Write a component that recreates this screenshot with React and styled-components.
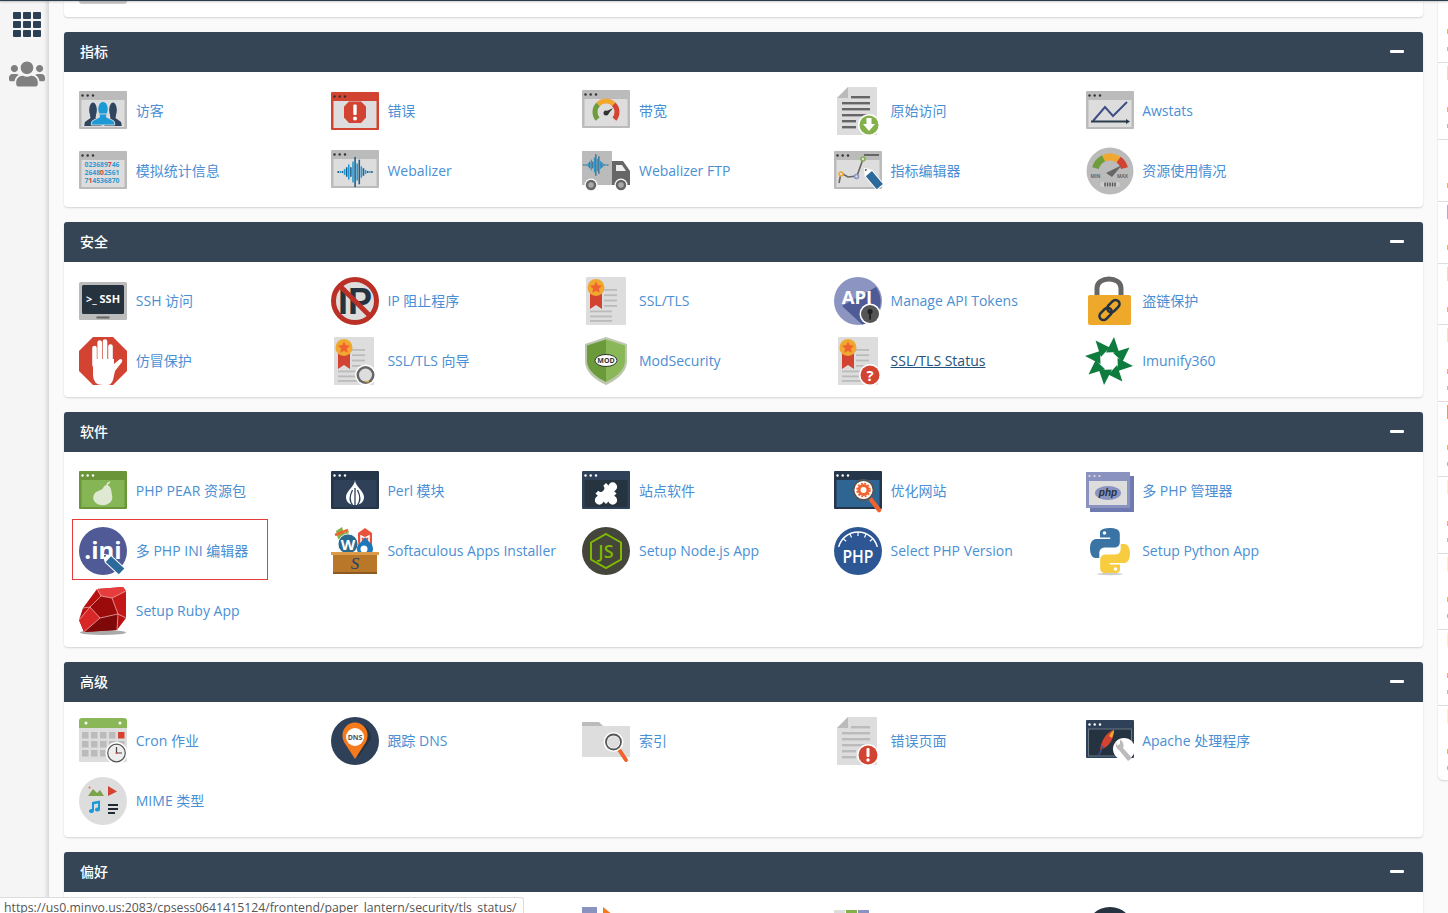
import React from 'react';
import styled, { createGlobalStyle } from 'styled-components';
import { FaUsers } from 'react-icons/fa';

const Global = createGlobalStyle`
  html, body { margin: 0; padding: 0; height: 913px; overflow: hidden; background: #fafafa; }
  body { font-family: "Open Sans", "Noto Sans CJK SC", sans-serif; font-size: 14px; }
  *, *::after { box-sizing: border-box; }
`;

const Page = styled.div`height: 913px; overflow: hidden; display: flex; flex-direction: column; background: #fafafa;`;
const TopLine = styled.div`height: 1px; flex: none; background: #2c3e50; box-shadow: 0 1px 2px rgba(0,0,0,.3); position: relative; z-index: 2;`;
const Shell = styled.div`flex: 1; min-height: 0; display: flex;`;
const Rail = styled.nav`
  width: 49px; flex: none; display: flex; flex-direction: column; align-items: center; gap: 19px;
  padding: 11px 0 0 5px; background: #f5f5f5; box-shadow: inset -4px 0 4px -2px rgba(0,0,0,.14);
  color: #808080;
`;
const Main = styled.main`width: 1359px; flex: none; margin-left: 15px; display: flex; flex-direction: column; gap: 15px;`;
const Panel = styled.section`
  background: #fff; border-radius: 4px; box-shadow: 0 1px 2px rgba(0,0,0,.16); flex: none;
`;
const Stub = styled(Panel)`height: 16px; border-radius: 0 0 4px 4px; padding-left: 15px; overflow: hidden;`;
const StubIcon = styled.div`width: 48px; height: 3px; background: #ccc; border-radius: 0 0 12px 12px;`;
const Head = styled.header`
  height: 40px; display: flex; align-items: center; justify-content: space-between; padding: 0 19px 2px 16px;
  background: #354556; color: #fff; border-radius: 3px 3px 0 0; font-weight: 500;
`;
const Collapse = styled.span`width: 14px; height: 3px; background: #fff; border-radius: 1px;`;
const Body = styled.div`display: grid; grid-template-columns: repeat(5, 251.6px); grid-auto-rows: 60px; padding: 9px 0 6px 15.2px;`;
const Item = styled.a`
  position: relative; display: flex; align-items: center; gap: 8.6px; height: 60px; white-space: nowrap;
  color: ${p => (p.$hover ? '#23527c' : '#4a8fd4')};
  text-decoration: none;
  ${p => p.$marked && `&::after { content: ''; position: absolute; left: -7px; top: -2px; width: 196px; height: 61px; border: 1px solid #e43b3b; }`}
`;
const Label = styled.span`line-height: 20px; text-decoration: ${p => (p.$hover ? 'underline' : 'none')};`;
const Aside = styled.aside`
  width: 10px; flex: none; margin-left: 15px; height: 779px; background: #fff; border-radius: 0 0 0 5px;
  box-shadow: 0 1px 2px rgba(0,0,0,.16); overflow: hidden;
`;
const Stat = styled.div`
  height: ${p => p.$h}px; border-bottom: 1px solid #ddd; position: relative;
  &:last-child { border-bottom: 0; }
`;
const Mark = styled.i`
  position: absolute; right: 0; width: 1px; height: ${p => p.$size || 5}px; background: ${p => p.$color}; top: ${p => p.$top}px;
`;
const Status = styled.div`
  position: fixed; left: 0; bottom: 0; width: 524px; height: 16px; padding: 1px 0 0 4px; background: #fff; overflow: hidden;
  border: 1px solid #ddd; border-width: 1px 1px 0 0; border-radius: 0 3px 0 0; z-index: 5; color: #555;
  font-size: 12.28px; line-height: 18px; white-space: nowrap;
`;
const Svg = styled.svg`width: 48px; height: 48px; flex: none; display: block;`;
const IconText = styled.text`font-family: "Open Sans", sans-serif; font-weight: 700;`;

const polar = (cx, cy, r, a) => [cx + r * Math.sin(a * Math.PI / 180), cy - r * Math.cos(a * Math.PI / 180)];
const arc = (cx, cy, r, a, b) => {
  const [x1, y1] = polar(cx, cy, r, a); const [x2, y2] = polar(cx, cy, r, b);
  return `M${x1} ${y1}A${r} ${r} 0 ${b - a > 180 ? 1 : 0} 1 ${x2} ${y2}`;
};
const Frame = ({ y = 4, frame = '#bbb', inner = '#ddd', dot = '#333', children }) => (
  <>
    <rect y={y} width="48" height="38" fill={frame} rx="1" />
    <rect x="2.5" y={y + 9} width="43" height="27" fill={inner} />
    {[3.5, 8.7, 14].map(x => <circle key={x} cx={x} cy={y + 4.5} r="1.2" fill={dot} />)}
    {children}
  </>
);
const Person = ({ x, c, s = 1, edge }) => (
  <g transform={`translate(${x} 0) scale(${s} 1)`} fill={c} stroke={edge} strokeWidth={edge ? 1 : 0}>
    <ellipse cx="0" cy="23" rx="6.2" ry="7.5" />
    <path d="M-5 28 L-4 31 L-13 35 Q-14 37 -14 39 H14 Q14 37 13 35 L4 31 L5 28Z" />
  </g>
);
const Wave = ({ cx, cy, k = 1, a = '#1d9ad6', b = '#1f5f8b' }) => {
  const hs = [1, 1, 1, 3, 5, 8, 5, 11, 16, 9, 13, 6, 4, 2, 1, 1, 1];
  return <g>{hs.map((h, i) => <rect key={i} x={cx + (i - 8) * 2 * k - .7} y={cy - h * k * .9} width={1.5 * k} height={h * 1.8 * k} fill={i % 2 ? a : b} />)}</g>;
};
const Doc = ({ line = '#bbb' }) => (
  <>
    <path d="M14 0H42a1 1 0 0 1 1 1V48H3V11Z" fill="#ddd" />
    <path d="M14 0V11H3Z" fill="#bbb" />
    {[9, 15, 21, 27, 33, 39].map((y, i) => <rect key={y} x={i === 0 ? 17 : 8} y={y} width={i === 0 ? 19 : i > 3 ? 14 : 28} height="2.4" fill={line} />)}
  </>
);
const Cert = () => (
  <>
    <rect x="3" width="40" height="48" rx="1" fill="#ddd" />
    {[12, 17.3, 22.6, 28].map(y => <rect key={y} x="21" y={y} width="13" height="1.8" fill="#bbb" />)}
    {[33.5, 38.5, 43].map(y => <rect key={y} x="7" y={y} width="22" height="1.8" fill="#bbb" />)}
    <path d="M7 14H19V32L13 28L7 32Z" fill="#d24332" />
    <circle cx="13" cy="10.5" r="8.5" fill="#f0a830" />
    <path d="M13 4.5l1.8 3.8 4.2.5-3.1 2.8.8 4.1-3.7-2-3.7 2 .8-4.1L7 8.800l4.200-.5Z" fill="#f2622e" />
  </>
);
const Badge = ({ cx = 35, cy = 38, r = 9.500, c, children }) => (
  <><circle cx={cx} cy={cy} r={r + 1.5} fill="#fff" /><circle cx={cx} cy={cy} r={r} fill={c} />{children}</>
);
const Pencil = ({ x, y, a = 45, len = 20, w = 7, c = '#2c6a9c' }) => (
  <g transform={`translate(${x} ${y}) rotate(${a})`}>
    <path d={`M0 0L6 ${-w / 2}H${len}V${w / 2}H6Z`} fill="#fff" stroke="#fff" strokeWidth="2" strokeLinejoin="round" />
    <path d={`M6 ${-w / 2}H${len}V${w / 2}H6Z`} fill={c} />
    <path d="M0 0L2 -1.200V1.200Z" fill="#222" />
  </g>
);
const Icon = ({ children }) => <Svg viewBox="0 0 48 48" overflow="visible">{children}</Svg>;

const I = {
  Visitors: () => <Icon><Frame><Person x={14} c="#2f4560" s={.62} /><Person x={34} c="#2f4560" s={.62} /><g transform="translate(0 -1)"><Person x={24} c="#1d9ad6" s={.84} edge="#ddd" /></g></Frame></Icon>,
  Errors: () => <Icon><Frame y={5} frame="#d24332"><path d="M18 14.500H30L35 19.500V30.500L30 36H18L13 30.500V19.500Z" fill="#d24332" /><rect x="22.300" y="17.500" width="3.400" height="10.500" rx="1" fill="#fff" /><circle cx="24" cy="31.500" r="2" fill="#fff" /></Frame></Icon>,
  Bandwidth: () => <Icon><Frame y={3}><g fill="none" strokeWidth="5"><path d={arc(24, 25, 11, -130, -45)} stroke="#6f9c3c" /><path d={arc(24, 25, 11, -45, 45)} stroke="#f0a830" /><path d={arc(24, 25, 11, 45, 130)} stroke="#d24332" /></g><path d="M23 25L31 21L25.500 28Z" fill="#333" /><circle cx="24" cy="26" r="2.500" fill="#333" /></Frame></Icon>,
  Raw: () => <Icon><Doc line="#666" /><Badge cx={35} cy={38} r={9.500} c="#84b04c"><path d="M32.500 31H37.500V37H41L35 44L29 37H32.500Z" fill="#fff" /></Badge></Icon>,
  Awstats: () => <Icon><Frame><path d="M7 34L19 20L27 29L41 15" fill="none" stroke="#3f4f86" strokeWidth="2" /><path d="M5 34.500H41" stroke="#2a3b4d" strokeWidth="2" /><path d="M40 32l4 2.500-4 2.500Z" fill="#2a3b4d" /></Frame></Icon>,
  Analog: () => <Icon><Frame><g fontSize="6.800" fill="#2b9bd4"><IconText x="5.500" y="19.500">023689<tspan fill="#d24332">7</tspan>46</IconText><IconText x="5.500" y="28">2648<tspan fill="#d24332">0</tspan>2561</IconText><IconText x="5.500" y="36.300">7<tspan fill="#d24332">1</tspan>4536870</IconText></g></Frame></Icon>,
  Webalizer: () => <Icon><Frame y={3}><Wave cx={24} cy={25} k={1.050} /></Frame></Icon>,
  Truck: () => <Icon><path d="M0 4H30V38H0Z" fill="#bbb" /><path d="M30 14H41L48 24V38H30Z" fill="#666" /><path d="M34 18H40L44 24H34Z" fill="#eee" /><Wave cx={14} cy={18} k={.75} /><g fill="#fff"><circle cx="9" cy="38" r="6.500" /><circle cx="39" cy="38" r="6.500" /></g><g fill="#aaa" stroke="#666" strokeWidth="2.500"><circle cx="9" cy="38" r="4" /><circle cx="39" cy="38" r="4" /></g></Icon>,
  MetricsEd: () => <Icon><Frame><path d="M5 36L7 26L14 30L23 29L29 12" fill="none" stroke="#666" strokeWidth="1.600" /><path d="M30 8H45" stroke="#666" strokeWidth="2" /><g fill="#ddd" strokeWidth="1.500"><circle cx="7" cy="27" r="2" stroke="#f0a830" /><circle cx="22.500" cy="29.500" r="2" stroke="#8a93c0" /><circle cx="29" cy="12" r="2" stroke="#84b04c" /></g><Pencil x={31} y={22} a={50} len={23} w={8} /></Frame></Icon>,
  Resource: () => <Icon><circle cx="24" cy="24" r="23.500" fill="#bbb" /><g fill="none" strokeWidth="7"><path d={arc(24, 25, 15, -75, -25)} stroke="#6f9c3c" /><path d={arc(24, 25, 15, -25, 35)} stroke="#f0a830" /><path d={arc(24, 25, 15, 35, 75)} stroke="#d24332" /></g><path d="M20 26L36 18L26 30Z" fill="#666" /><g fontSize="4.800" fill="#666"><IconText x="4.500" y="31">MIN</IconText><IconText x="31" y="31">MAX</IconText></g><rect x="14" y="35" width="20" height="5" rx="2.500" fill="#ccc" />{[19, 21.500, 24, 26.500, 29].map(x => <rect key={x} x={x - .7} y="35.500" width="1.500" height="4" fill="#555" />)}</Icon>,
  Ssh: () => <Icon><rect y="5" width="48" height="38" rx="1.500" fill="#bbb" /><rect x="3" y="8" width="42" height="29" rx="1.500" fill="#26333f" /><rect x="17.500" y="39.500" width="13" height="2" fill="#666" /><IconText x="7" y="25.500" fontSize="10.500" fill="#fff" textLength="34" lengthAdjust="spacingAndGlyphs">&gt;_ SSH</IconText></Icon>,
  Block: () => <Icon><circle cx="24" cy="24" r="21.500" fill="#ddd" stroke="#bb3026" strokeWidth="5" /><text x="24" y="37" textAnchor="middle" fontFamily="'Liberation Sans', sans-serif" fontWeight="700" fontSize="36" fill="#25323f">IP</text><path d="M9 9L39 39" stroke="#bb3026" strokeWidth="5" /></Icon>,
  Hand: () => <Icon><path d="M14 0H34L48 14V34L34 48H14L0 34V14Z" fill="#d24332" /><path d="M14 26V38Q14 48 24 48H29Q32 48 34 43L36 34L43 25Q44 22 41 22L35 27V22H14Z" fill="#fff" /><g stroke="#fff" strokeWidth="4.600" strokeLinecap="round"><path d="M15.500 28V11" /><path d="M20.700 24V5.500" /><path d="M26 24V4.500" /><path d="M31.500 28V9.500" /></g></Icon>,
  Ssl: () => <Icon><g transform="translate(1 0)"><Cert /></g></Icon>,
  Api: () => <Icon><circle cx="24" cy="24" r="24" fill="#8c95c1" /><path d="M8 29L42 10A24 24 0 0 1 28 47.500L8 29Z" fill="#4f5b96" /><IconText x="23" y="27" textAnchor="middle" fontSize="18.500" fill="#fff">API</IconText><Badge cx={36} cy={37} r={9} c="#555"><circle cx="36" cy="34.500" r="2.600" fill="#222" /><rect x="35" y="35" width="2" height="7.500" fill="#222" /></Badge></Icon>,
  Lock: () => <Icon><path d="M11 20V11C11 -1 35 -1 35 11V20" fill="none" stroke="#666" strokeWidth="5" /><rect x="2" y="18" width="43" height="30" rx="2" fill="#eea82a" /><g fill="none" stroke="#25323f" strokeWidth="2.600" transform="rotate(-45 23.500 33)"><rect x="11" y="29" width="14" height="8" rx="4" /><rect x="22" y="29" width="14" height="8" rx="4" /></g></Icon>,
  Wizard: () => <Icon><Cert /><Badge cx={34.500} cy={38} r={9} c="#666"><circle cx="34.500" cy="38" r="6.500" fill="#ddd" /><path d="M34 44.500H38" stroke="#f0a830" strokeWidth="1.500" /></Badge></Icon>,
  Mod: () => <Icon><path d="M24 0L45 7V24C45 36 33 44 24 48C15 44 3 36 3 24V7Z" fill="#bcc7ae" /><path d="M24 2.500V45C16 41 5 34 5 24V8.500Z" fill="#6a9a3a" /><path d="M24 2.500V45C32 41 43 34 43 24V8.500Z" fill="#8ab858" /><ellipse cx="24" cy="23.500" rx="11" ry="6" fill="#fff" stroke="#333" strokeWidth="1" /><IconText x="24" y="26" textAnchor="middle" fontSize="7" fill="#333">MOD</IconText></Icon>,
  SslStatus: () => <Icon><g transform="translate(1 0)"><Cert /></g><Badge cx={36} cy={38} r={9.500} c="#d24332"><IconText x="36" y="44" textAnchor="middle" fontSize="15" fill="#fff">?</IconText></Badge></Icon>,
  Imunify: () => <Icon>{[0, 45, 90, 135, 180, 225, 270, 315].map(a => <polygon key={a} transform={`rotate(${a} 23 24)`} points="28,0 33,15 20,15.500" fill="#0e7c3e" />)}<circle cx="23" cy="24" r="7.500" fill="#fff" /></Icon>,
  Pear: () => <Icon><Frame frame="#6a9538" inner="#85b555" dot="#fff"><path d="M31 15Q28 16 28 19" stroke="#dfe8d2" strokeWidth="1.500" fill="none" /><path d="M28 18C33 20 32 24 33 28C35 35 28 39 22 38C15 37 12 31 16 26C19 23 22 24 24 21C25 19 26 18 28 18Z" fill="#dfe8d2" /></Frame></Icon>,
  Perl: () => <Icon><Frame frame="#26364a" inner="#2f4059" dot="#fff"><path d="M24 13C24 19 33 24 33 30C33 36 28 38 24 38C20 38 15 36 15 30C15 24 24 19 24 13Z" fill="#fff" /><g fill="none" stroke="#2f4059" strokeWidth="1.300"><path d="M24 21V38" /><path d="M21.500 23C18 30 19 35 21.500 38" /><path d="M26.500 23C30 30 29 35 26.500 38" /></g></Frame></Icon>,
  Software: () => <Icon><Frame frame="#2f4059" inner="#25343f" dot="#fff"><g transform="translate(24 26.500) rotate(45) scale(1.350) translate(-24 -26.500)" fill="#fff"><rect x="18.500" y="21" width="11" height="11" /><circle cx="24" cy="19.500" r="3.300" /><circle cx="31" cy="26.500" r="3.300" /><circle cx="24" cy="33.500" r="3.300" /><circle cx="18.500" cy="26.500" r="2.600" fill="#25343f" /></g></Frame></Icon>,
  Optimize: () => <Icon><Frame frame="#26364a" inner="#2f6592" dot="#fff"><path d="M35 30L45 43" stroke="#f2622e" strokeWidth="4.500" strokeLinecap="round" /><circle cx="29.500" cy="23" r="10" fill="#fff" stroke="#555" strokeWidth="1.800" /><circle cx="29.500" cy="23" r="4.500" fill="none" stroke="#f2622e" strokeWidth="3" /><circle cx="29.500" cy="23" r="6.500" fill="none" stroke="#f2622e" strokeWidth="1.600" strokeDasharray="2 1.400" /></Frame></Icon>,
  MultiPhp: () => <Icon><rect x="4" y="9" width="44" height="36" fill="#6f7bb0" /><rect y="5" width="44" height="36" fill="#8a93c0" />{[3.500, 8.500, 13.500].map(x => <circle key={x} cx={x} cy="9" r="1.100" fill="#ddd" />)}<rect x="3" y="14" width="38" height="24" fill="#ddd" /><ellipse cx="22" cy="26" rx="13" ry="7" fill="#8a93c0" /><text x="22" y="29" textAnchor="middle" fontFamily="'Liberation Sans', sans-serif" fontStyle="italic" fontWeight="700" fontSize="10" fill="#25323f">php</text></Icon>,
  Ini: () => <Icon><circle cx="24" cy="24" r="24" fill="#505a96" /><IconText x="24" y="32" textAnchor="middle" fontSize="24" fill="#fff">.ini</IconText><Pencil x={25} y={28} a={43} len={24} w={8} /></Icon>,
  Softaculous: () => <Icon><path d="M5 4L11 0L13 6L18 4L16 12L7 12Z" fill="#84b04c" /><path d="M4 8L17 3" stroke="#f2622e" strokeWidth="2.500" /><path d="M27 6L34 1L41 6V20H27Z" fill="#e8523a" /><path d="M30 19V9L34 11L38 9V19" fill="none" stroke="#fff" strokeWidth="1.500" /><circle cx="17" cy="17" r="10" fill="#2b6a8f" stroke="#fff" strokeWidth=".8" /><IconText x="17" y="22.500" fontSize="15" textAnchor="middle" fill="#fff">W</IconText><path d="M34 10C37 15 42 16 42 22C42 26 38 28 34 28C30 28 26 26 26 22C26 16 32 15 34 10Z" fill="#1c78b8" /><circle cx="33" cy="22" r="3.500" fill="#fff" /><path d="M0 25H48V28H46V45Q46 47 44 47H4Q2 47 2 45V28H0Z" fill="#b9772a" /><rect y="25" width="48" height="3" fill="#dc9a4b" /><rect x="2" y="45" width="44" height="2" fill="#8a5a20" /><text x="24" y="42" textAnchor="middle" fontFamily="'Liberation Serif', serif" fontStyle="italic" fontSize="17" fill="#1d3f6e">S</text></Icon>,
  Node: () => <Icon><circle cx="24" cy="24" r="24" fill="#44453b" /><path d="M24 7L39 15.500V32.500L24 41L9 32.500V15.500Z" fill="none" stroke="#7fb900" strokeWidth="2" /><text x="24" y="31" textAnchor="middle" fontFamily="'Open Sans', sans-serif" fontWeight="600" fontSize="18" fill="#7fb900">JS</text></Icon>,
  SelectPhp: () => <Icon><circle cx="24" cy="24" r="24" fill="#2c5794" /><path d={arc(24, 25, 20, -75, 75)} fill="none" stroke="#fff" strokeWidth="1.500" />{[-48, -24, 0, 24, 48].map(a => { const [x1, y1] = polar(24, 25, 20, a); const [x2, y2] = polar(24, 25, 16, a); return <path key={a} d={`M${x1} ${y1}L${x2} ${y2}`} stroke="#fff" strokeWidth="1.200" />; })}<text x="24" y="36" textAnchor="middle" fontFamily="'Open Sans', sans-serif" fontWeight="600" fontSize="18" fill="#fff" textLength="31" lengthAdjust="spacingAndGlyphs">PHP</text></Icon>,
  Python: () => {
    const d = 'M23.800 1C13.500 1 14 5.500 14 5.500V10.500H24.200V12H10.500C10.500 12 4 11.300 4 21.600C4 31.500 9.700 31.100 9.700 31.100H13.300V26.300C13.300 26.300 13 20.500 19 20.500H28.500C28.500 20.500 33.800 20.600 33.800 15.500V6.800C33.800 6.800 34.600 1 23.800 1Z';
    return <Icon><path d={d} fill="#3a74a5" /><circle cx="18.500" cy="6" r="1.800" fill="#fff" /><g transform="rotate(180 24 24)"><path d={d} fill="#f7cd3f" /><circle cx="18.500" cy="6" r="1.800" fill="#fff" /></g><ellipse cx="24" cy="47" rx="13" ry="1.200" fill="#ccc" /></Icon>;
  },
  Ruby: () => <Icon><ellipse cx="24" cy="45.500" rx="23" ry="2.500" fill="#aaa" /><path d="M18 2L44 0L47 4V31L38 43L5 45L0 33L4 21Z" fill="#b81010" /><path d="M18 2L44 0L47 4L33 11L22 9Z" fill="#e63c3c" /><path d="M22 9L33 11L39 27L21 31L11 20Z" fill="#9c0b0b" /><path d="M0 33L11 20L21 31L5 45Z" fill="#d92626" /><path d="M21 31L39 27L38 43L5 45Z" fill="#7f0808" /><path d="M33 11L47 4V31L39 27Z" fill="#c41818" /><g fill="none" stroke="#f7c0c0" strokeWidth=".7"><path d="M18 2L22 9L11 20L4 21M11 20L21 31L5 45M21 31L39 27L47 31M39 27L33 11L47 4M33 11L22 9M11 20L0 33M39 27L38 43" /></g></Icon>,
  Cron: () => <Icon><path d="M3 1H45a3 3 0 0 1 3 3V11H0V4a3 3 0 0 1 3-3Z" fill="#8ab858" /><path d="M0 11H48V44a1 1 0 0 1-1 1H1a1 1 0 0 1-1-1Z" fill="#ddd" /><circle cx="7" cy="6" r="1.500" fill="#fff" /><circle cx="41" cy="6" r="1.500" fill="#fff" />{[15, 24, 33].flatMap((y, r) => [3, 12, 21, 30, 39].map((x, c) => <rect key={`${r}${c}`} x={x} y={y} width="6.500" height="6.500" fill={r === 0 && c === 4 ? '#d24332' : '#bbb'} />))}<circle cx="37.500" cy="36" r="11" fill="#fff" /><circle cx="37.500" cy="36" r="8.800" fill="#eee" stroke="#555" strokeWidth="1.200" /><path d="M37.500 30V36H43" fill="none" stroke="#444" strokeWidth="1.200" /><circle cx="37.500" cy="36" r="1" fill="#d24332" /></Icon>,
  Dns: () => <Icon><circle cx="24" cy="24" r="24" fill="#2f4059" /><path d="M27 40L40 22C40 14 35 7 26 6Z" fill="#25323f" /><path d="M24 42L13 25C8 14 16 5.500 24 5.500C32 5.500 40 14 35 25Z" fill="#f47a1c" /><circle cx="24" cy="20" r="9" fill="#fff" /><IconText x="24" y="22.500" textAnchor="middle" fontSize="7" fill="#555">DNS</IconText></Icon>,
  Index: () => <Icon><path d="M0 9V6a1 1 0 0 1 1-1H17L21 9Z" fill="#bbb" /><rect y="9" width="48" height="31" fill="#ddd" /><path d="M36 31L44 43" stroke="#f2622e" strokeWidth="4" strokeLinecap="round" /><circle cx="31.500" cy="25" r="8" fill="#ddd" stroke="#fff" strokeWidth="4" /><circle cx="31.500" cy="25" r="7.500" fill="none" stroke="#555" strokeWidth="1.800" /></Icon>,
  ErrorPage: () => <Icon><Doc /><Badge cx={34} cy={38} r={9.500} c="#d24332"><rect x="32.500" y="31" width="3" height="9" rx="1" fill="#fff" /><circle cx="34" cy="43" r="1.700" fill="#fff" /></Badge></Icon>,
  Apache: () => <Icon><Frame y={3} frame="#2f4059" inner="#25323f" dot="#fff"><rect x="2.500" y="12" width="43" height="27" fill="none" stroke="#6b7885" strokeWidth="1" /><path d="M14 34C15 24 20 15 28 13C28 21 24 29 16 32Z" fill="#d24332" /><path d="M23 19C25 16 26 14 28 13C28 16 27 18 26 21Z" fill="#f0a830" /><path d="M12 40L17 29" stroke="#3f4f86" strokeWidth="1.500" /><circle cx="38" cy="32" r="11" fill="#fff" /><path d="M30 25A6.500 6.500 0 0 0 33 33L42 44L46 41L37 31A6.500 6.500 0 0 0 34 22.500V27L31 28.500Z" fill="#bbb" /></Frame></Icon>,
  Mime: () => <Icon><circle cx="24" cy="24" r="24" fill="#ddd" /><path d="M9 19L14 12L18 16L21 13L25 19Z" fill="#7ba348" /><circle cx="10.500" cy="10.500" r="1" fill="#f2622e" /><path d="M29 9L38 14.500L29 19Z" fill="#d24332" /><path d="M13 25L21 23.500V32.500A2.500 2 0 1 1 19 30.500V26.500L15 27.300V34A2.500 2 0 1 1 13 32Z" fill="#1d9ad6" /><g fill="#222b35"><rect x="29" y="27" width="10" height="2" /><rect x="29" y="31" width="10" height="2" /><rect x="29" y="35" width="7" height="2" /></g></Icon>,
  PartA: () => <Icon><rect width="15" height="30" fill="#8a93c0" /><path d="M21 0L31 8H21Z" fill="#f47a1c" /></Icon>,
  PartB: () => <Icon><rect x="0" y="3" width="11" height="30" fill="#ddd" /><rect x="12" y="3" width="11" height="30" fill="#84b04c" /><rect x="24" y="3" width="11" height="30" fill="#8a93c0" /></Icon>,
  PartC: () => <Icon><circle cx="24" cy="24" r="24" fill="#25323f" /></Icon>
};

const PANELS = [
  { title: '指标', items: [
    ['访客', I.Visitors], ['错误', I.Errors], ['带宽', I.Bandwidth], ['原始访问', I.Raw], ['Awstats', I.Awstats],
    ['模拟统计信息', I.Analog], ['Webalizer', I.Webalizer], ['Webalizer FTP', I.Truck], ['指标编辑器', I.MetricsEd], ['资源使用情况', I.Resource]
  ] },
  { title: '安全', items: [
    ['SSH 访问', I.Ssh], ['IP 阻止程序', I.Block], ['SSL/TLS', I.Ssl], ['Manage API Tokens', I.Api], ['盗链保护', I.Lock],
    ['仿冒保护', I.Hand], ['SSL/TLS 向导', I.Wizard], ['ModSecurity', I.Mod], ['SSL/TLS Status', I.SslStatus, 'hover'], ['Imunify360', I.Imunify]
  ] },
  { title: '软件', items: [
    ['PHP PEAR 资源包', I.Pear], ['Perl 模块', I.Perl], ['站点软件', I.Software], ['优化网站', I.Optimize], ['多 PHP 管理器', I.MultiPhp],
    ['多 PHP INI 编辑器', I.Ini, 'marked'], ['Softaculous Apps Installer', I.Softaculous], ['Setup Node.js App', I.Node], ['Select PHP Version', I.SelectPhp], ['Setup Python App', I.Python],
    ['Setup Ruby App', I.Ruby]
  ] },
  { title: '高级', items: [
    ['Cron 作业', I.Cron], ['跟踪 DNS', I.Dns], ['索引', I.Index], ['错误页面', I.ErrorPage], ['Apache 处理程序', I.Apache],
    ['MIME 类型', I.Mime]
  ] },
  { title: '偏好', items: [
    ['', null], ['', null], ['', I.PartA], ['', I.PartB], ['', I.PartC]
  ] }
];

const STATS = [
  [62, 28, 46, null], [77, 44, 61, '#f6d5d0'], [62, 43, null, null], [62, 43, null, '#b9a6c9'], [61, 43, null, '#f6d5d0'],
  [77, 44, 61, '#f9dfc4'], [75, 43, 60, '#e89a50'], [77, 44, 61, '#faf0cc'], [76, 43, 60, '#faf0cc'], [76, 43, 60, '#faf0cc'], [74, 43, 60, '#faf0cc']
];

const GridGlyph = () => (
  <svg width="28" height="25" viewBox="0 0 28 25" fill="#2b3f55">
    {[0, 9, 18].flatMap(y => [0, 10, 20].map(x => <rect key={`${x}-${y}`} x={x} y={y} width="8" height="7" rx="1" />))}
  </svg>
);

export default function App() {
  return (
    <Page>
      <Global />
      <TopLine />
      <Shell>
        <Rail>
          <GridGlyph />
          <FaUsers size={36} />
        </Rail>
        <Main>
          <Stub><StubIcon /></Stub>
          {PANELS.map(panel => (
            <Panel key={panel.title}>
              <Head>{panel.title}<Collapse /></Head>
              <Body>
                {panel.items.map(([label, Glyph, state], i) => (
                  <Item key={i} $hover={state === 'hover'} $marked={state === 'marked'}>
                    {Glyph && <Glyph />}
                    {label && <Label $hover={state === 'hover'}>{label}</Label>}
                  </Item>
                ))}
              </Body>
            </Panel>
          ))}
        </Main>
        <Aside>
          {STATS.map(([h, orange, grey, top], i) => (
            <Stat key={i} $h={h}>
              {top && <Mark $color={top} $top={3} $size={14} />}
              <Mark $color="#f0b060" $top={orange} />
              {grey && <Mark $color="#bbb" $top={grey} $size={4} />}
            </Stat>
          ))}
        </Aside>
      </Shell>
      <Status>https://us0.minvo.us:2083/cpsess0641415124/frontend/paper_lantern/security/tls_status/</Status>
    </Page>
  );
}
